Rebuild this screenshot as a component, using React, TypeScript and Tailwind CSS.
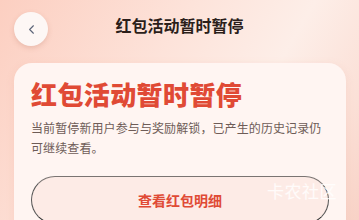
import { ChevronLeft } from "lucide-react";

export default function App() {
  return (
    <div
      className="relative w-[359px] h-[220px] overflow-hidden bg-[linear-gradient(120deg,#fccfc1_0%,#fde3da_40%,#fdeee8_65%,#fbe0d7_85%,#f8d2c6_100%)]"
      style={{ fontFamily: '"Noto Sans CJK SC", "Noto Sans", sans-serif' }}
    >
      {/* header */}
      <div className="relative h-[46px] pt-3 px-[14px]">
        <button className="w-[34px] h-[34px] rounded-full bg-[#fdf7f5] shadow-[0_2px_5px_rgba(180,110,90,0.25)] flex items-center justify-center">
          <ChevronLeft size={15} strokeWidth={1.75} className="text-[#5b6478]" />
        </button>
        <h1 className="absolute left-0 right-0 top-[13px] text-center text-[16px] leading-[24px] font-bold text-[#2b1e1a]">
          红包活动暂时暂停
        </h1>
      </div>

      {/* card */}
      <div className="mt-[17px] mx-[14px] w-[332px] rounded-[18px] bg-[#fff5f2] shadow-[0_2px_8px_rgba(220,140,120,0.15)] px-[17px] pt-[14px] pb-6">
        <h2 className="text-[26px] leading-[34px] font-black text-[#e04a35] tracking-[0.4px]">红包活动暂时暂停</h2>
        <p className="mt-[7px] text-[12px] leading-[20px] text-[#6e5c57] tracking-[0.1px]">
          当前暂停新用户参与与奖励解锁，已产生的历史记录仍可继续查看。
        </p>
        <button className="mt-[18px] w-full h-[48px] rounded-full border-[1.5px] border-t-[#7a7472] border-x-[#555] border-b-[#333] bg-[#fdebe6] flex items-center justify-center text-[14px] font-bold text-[#e04a35]">
          查看红包明细
        </button>
      </div>

      {/* watermark */}
      <div className="absolute left-[267px] top-[179px] text-[17px] leading-[24px] text-white/80 tracking-[0.5px]">
        卡农社区
      </div>
    </div>
  );
}
